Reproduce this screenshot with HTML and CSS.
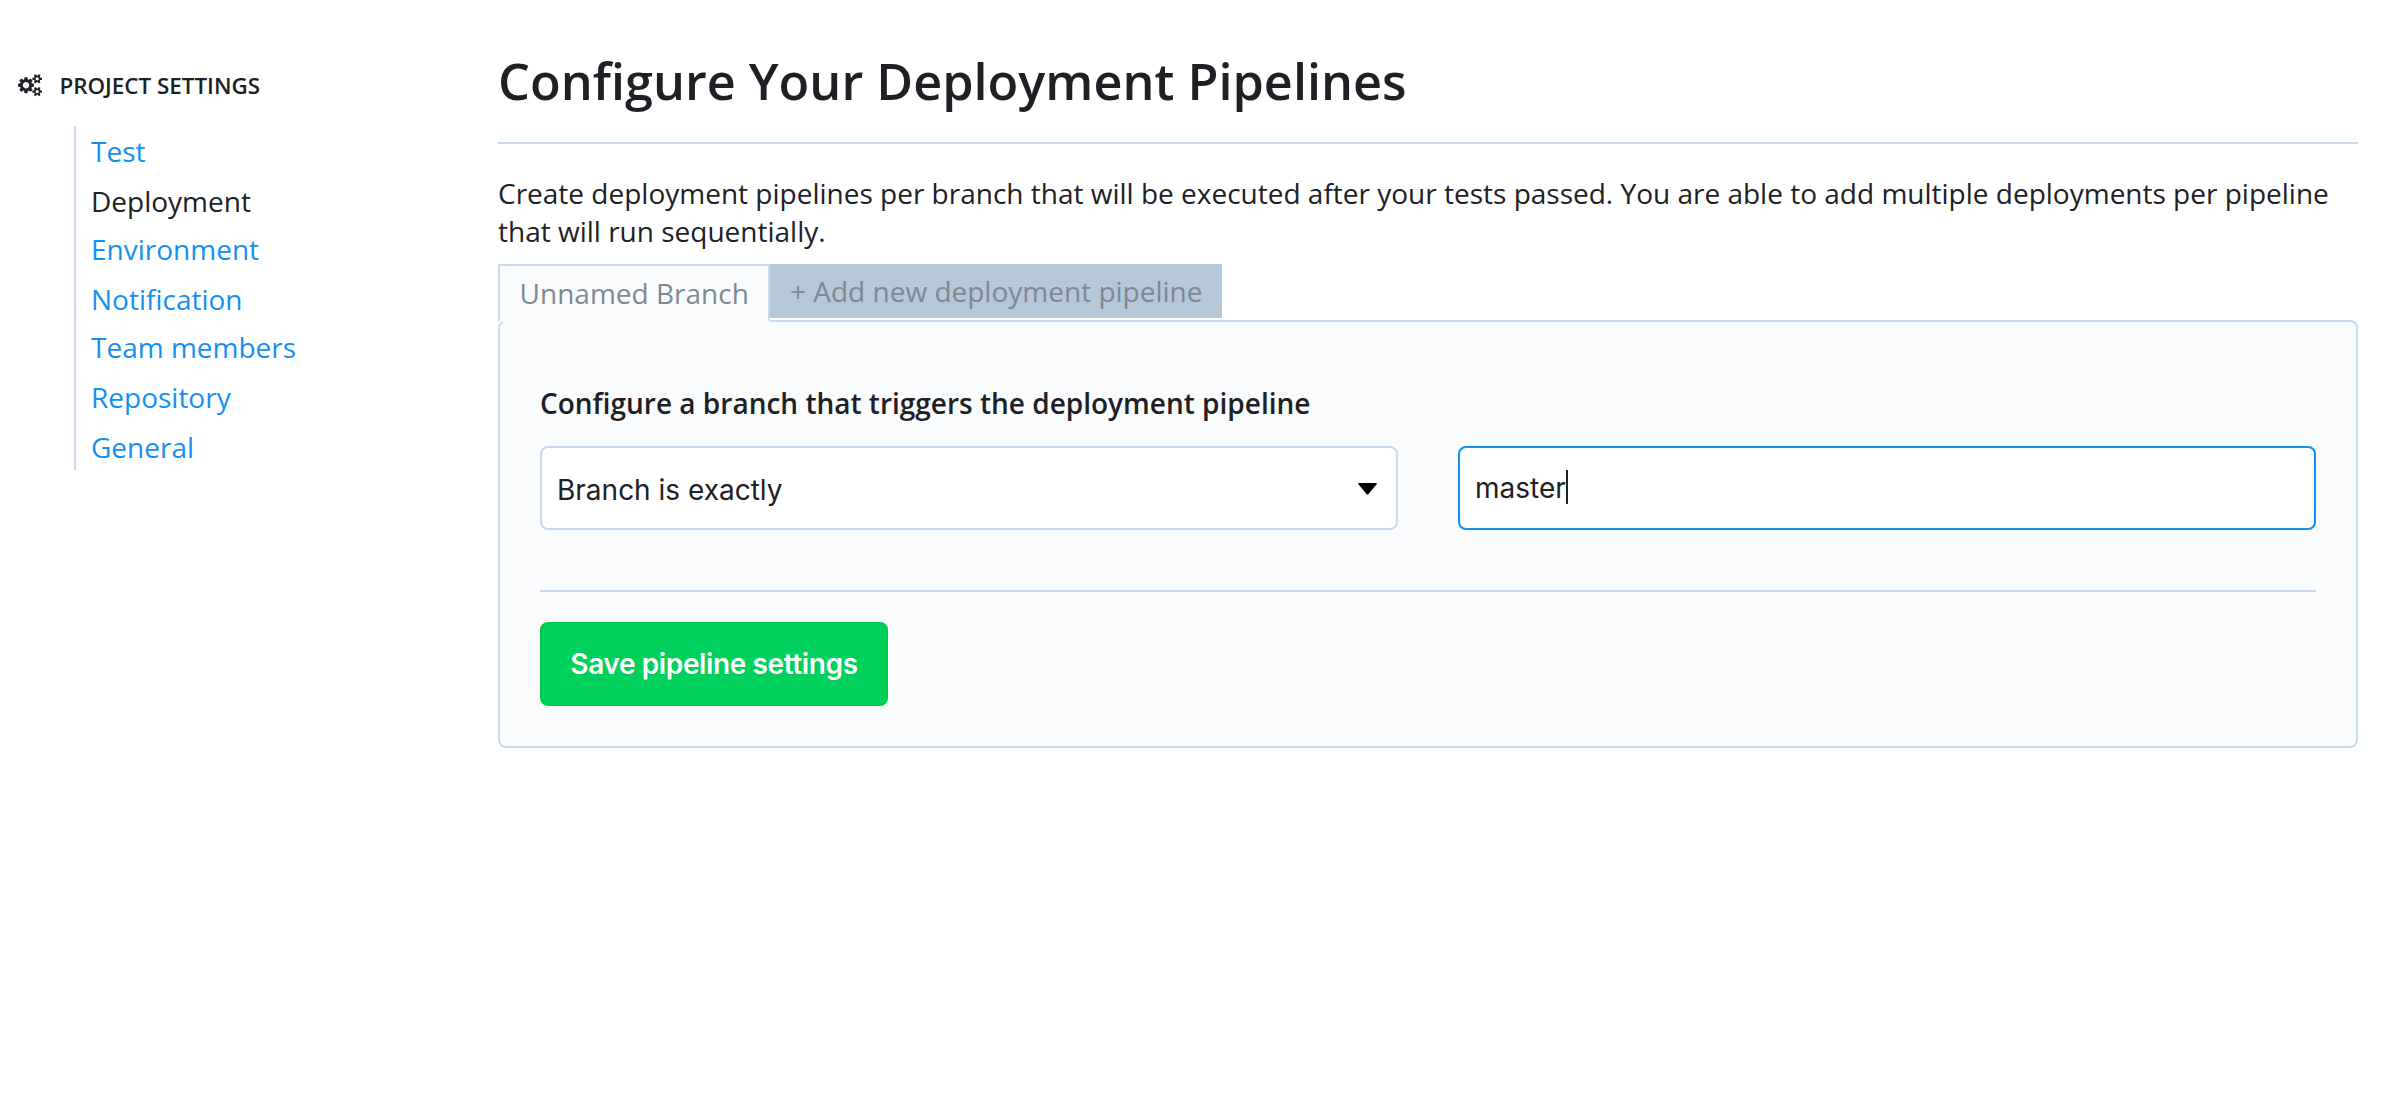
FILE: index.html
```html
<!DOCTYPE html>
<html lang="en">
<head>
<meta charset="utf-8">
<title>Configure Your Deployment Pipelines</title>
<link rel="stylesheet" href="styles.css">
</head>
<body>
<div class="page">
  <aside class="sidebar">
    <h2 class="sidebar-title">
      <svg class="cogs" viewBox="0 0 1920 1792" aria-hidden="true"><path fill="currentColor" d="M896 896q0-106-75-181t-181-75-181 75-75 181 75 181 181 75 181-75 75-181zm768 512q0-52-38-90t-90-38-90 38-38 90q0 53 37.5 90.5t90.5 37.5 90.5-37.5 37.5-90.5zm0-1024q0-52-38-90t-90-38-90 38-38 90q0 53 37.5 90.5t90.5 37.5 90.5-37.5 37.5-90.5zm-384 421v185q0 10-7 19.5t-16 10.5l-155 24q-11 35-32 76 34 48 90 115 7 11 7 20 0 12-7 19-23 30-82.5 89.5t-78.5 59.5q-11 0-21-7l-115-90q-37 19-77 31-11 108-23 155-7 24-30 24h-186q-11 0-20-7.5t-10-17.5l-23-153q-34-10-75-31l-118 89q-7 7-20 7-11 0-21-8-144-133-144-160 0-9 7-19 10-14 41-53t47-61q-23-44-35-82l-152-24q-10-1-17-9.5t-7-19.5v-185q0-10 7-19.5t16-10.5l155-24q11-35 32-76-34-48-90-115-7-11-7-20 0-12 7-20 22-30 82-89t79-59q11 0 21 7l115 90q34-18 77-32 11-108 23-154 7-24 30-24h186q11 0 20 7.5t10 17.5l23 153q34 10 75 31l118-89q8-7 20-7 11 0 21 8 144 133 144 160 0 8-7 19-12 16-42 54t-45 60q23 48 34 82l152 23q10 2 17 10.5t7 19.5zm640 533v140q0 16-149 31-12 27-30 52 51 113 51 138 0 4-4 7-122 71-124 71-8 0-46-47t-52-68q-20 2-30 2t-30-2q-14 21-52 68t-46 47q-2 0-124-71-4-3-4-7 0-25 51-138-18-25-30-52-149-15-149-31v-140q0-16 149-31 13-29 30-52-51-113-51-138 0-4 4-7 4-2 35-20t59-34 30-16q8 0 46 46.5t52 67.5q20-2 30-2t30 2q51-71 92-112l6-2q4 0 124 70 4 3 4 7 0 25-51 138 17 23 30 52 149 15 149 31zm0-1024v140q0 16-149 31-12 27-30 52 51 113 51 138 0 4-4 7-122 71-124 71-8 0-46-47t-52-68q-20 2-30 2t-30-2q-14 21-52 68t-46 47q-2 0-124-71-4-3-4-7 0-25 51-138-18-25-30-52-149-15-149-31v-140q0-16 149-31 13-29 30-52-51-113-51-138 0-4 4-7 4-2 35-20t59-34 30-16q8 0 46 46.5t52 67.5q20-2 30-2t30 2q51-71 92-112l6-2q4 0 124 70 4 3 4 7 0 25-51 138 17 23 30 52 149 15 149 31z"/></svg>
      <span>PROJECT SETTINGS</span>
    </h2>
    <ul class="nav">
      <li><a href="#">Test</a></li>
      <li><a href="#" class="current">Deployment</a></li>
      <li><a href="#">Environment</a></li>
      <li><a href="#">Notification</a></li>
      <li><a href="#">Team members</a></li>
      <li class="tall"><a href="#">Repository</a></li>
      <li><a href="#">General</a></li>
    </ul>
  </aside>
  <main class="content">
    <h1 class="title">Configure Your Deployment Pipelines</h1>
    <p class="intro">Create deployment pipelines per branch that will be executed after your tests passed. You are able to add multiple deployments per pipeline that will run sequentially.</p>
    <div class="tabs">
      <div class="tab tab-active">Unnamed Branch</div>
      <div class="tab tab-add">+ Add new deployment pipeline</div>
    </div>
    <section class="panel">
      <h3 class="panel-title">Configure a branch that triggers the deployment pipeline</h3>
      <div class="fields">
        <div class="field select">
          <span>Branch is exactly</span>
          <svg class="arrow" viewBox="0 0 19 12" aria-hidden="true"><path d="M0.8 0H18.2Q19.4 0.3 18.4 1.4L10.3 11.2Q9.5 12 8.7 11.2L0.6 1.4Q-0.4 0.3 0.8 0Z"/></svg>
        </div>
        <div class="field input"><span>master</span><i class="caret"></i></div>
      </div>
      <div class="actions">
        <button class="save" type="button">Save pipeline settings</button>
      </div>
    </section>
  </main>
</div>
</body>
</html>
```
FILE: styles.css
```css
* {
  box-sizing: border-box;
}

body {
  margin: 0;
  background: #fff;
  color: #1d2125;
  font: 400 28px/38px "Open Sans", sans-serif;
}

h1, h2, h3, p, ul {
  margin: 0;
  padding: 0;
}

.page {
  display: flex;
  padding-right: 28px;
}

.sidebar {
  flex: 0 0 498px;
  padding: 70px 0 0 18px;
}

.sidebar-title {
  display: flex;
  align-items: center;
  gap: 17.4px;
  height: 31px;
  font-size: 22.4px;
  font-weight: 600;
  line-height: 31px;
}

.cogs {
  width: 24px;
  height: 22.4px;
}

.nav {
  margin: 25px 0 0 56px;
  padding-left: 15px;
  border-left: 2px solid #c8d9f0;
  list-style: none;
}

.nav li {
  height: 50px;
  padding-top: 6px;
}

.nav li:nth-child(even):not(.tall),
.nav li:last-child {
  height: 48px;
}

.nav a {
  color: #1490f2;
  text-decoration: none;
}

.nav .current {
  color: #1d2125;
}

.content {
  flex: 1;
  min-width: 0;
  padding-top: 46px;
}

.title {
  height: 98px;
  border-bottom: 2px solid #c8d9f0;
  font-size: 50.4px;
  font-weight: 600;
  line-height: 69px;
}

.intro {
  margin: 30px 0 14px;
}

.tabs {
  display: flex;
  align-items: flex-start;
  color: #7e8993;
}

.tab {
  padding: 8px 19.6px;
}

.tab-active {
  position: relative;
  height: 58px;
  margin-bottom: -2px;
  border: 2px solid #c8dbef;
  border-bottom-color: #fafbfd;
  background: #fafbfd;
}

.tab-add {
  height: 54px;
  background: #b5c8d8;
}

.panel {
  height: 428px;
  padding: 62px 40px 0;
  border: 2px solid #c8dbef;
  border-radius: 8px;
  background: #fafbfd;
}

.panel-title {
  font-size: 28px;
  font-weight: 600;
}

.fields {
  display: grid;
  grid-template-columns: 1fr 1fr;
  gap: 60px;
  margin-top: 24px;
  padding-bottom: 60px;
  border-bottom: 2px solid #c8d9f0;
}

.field {
  display: flex;
  height: 84px;
  border: 2px solid #c8d9f0;
  border-radius: 8px;
  background: #fff;
  font-family: Inter, sans-serif;
  line-height: 34px;
}

.select {
  justify-content: space-between;
  padding: 25px 19px 0 15px;
}

.arrow {
  width: 19px;
  height: 12px;
  margin-top: 10px;
}

.input {
  padding: 23px 14px 0 15px;
  border-color: #1490f2;
}

.caret {
  width: 2px;
  height: 34px;
  margin-top: -1px;
  background: #1d2125;
}

.actions {
  margin-top: 30px;
}

.save {
  display: block;
  width: 348px;
  height: 84px;
  padding: 0;
  border: 2px solid #00cb48;
  border-radius: 8px;
  background: #00d15c;
  color: #fff;
  font: 600 28px/34px Inter, sans-serif;
  letter-spacing: -0.38px;
}
```
